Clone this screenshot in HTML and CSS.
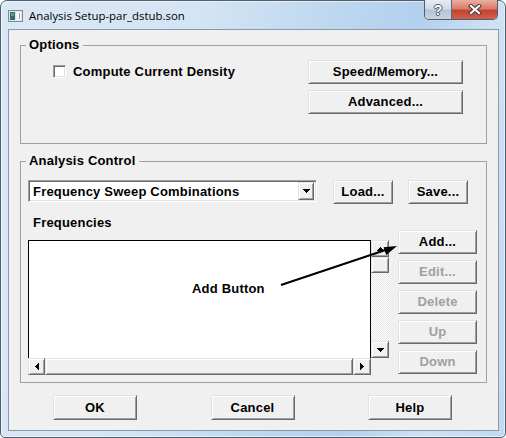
FILE: index.html
```html
<!DOCTYPE html>
<html>
<head>
<meta charset="utf-8">
<title>Analysis Setup</title>
<link rel="stylesheet" href="styles.css">
</head>
<body>
<div class="window">
  <div class="titlebar">
    <svg class="app-icon" width="15" height="12" viewBox="0 0 15 12" shape-rendering="crispEdges">
      <rect x="0.5" y="0.5" width="14" height="11" fill="#e4e8ec" stroke="#7d8a96"/>
      <rect x="2" y="2" width="5" height="8" fill="#2f6f5c"/>
      <rect x="3" y="3" width="3" height="3" fill="#5fa08a"/>
      <rect x="8" y="2" width="5" height="8" fill="#f6f8fa"/>
      <rect x="11" y="3" width="1" height="6" fill="#9aa6b1"/>
    </svg>
    <span class="title">Analysis Setup-par_dstub.son</span>
    <div class="caption-btns">
      <div class="cap help">?</div>
      <div class="cap close">
        <svg width="14" height="11" viewBox="0 0 14 11">
          <path d="M3 2 L11 9 M11 2 L3 9" stroke="#4a3a38" stroke-width="4.2" stroke-linecap="square"/>
          <path d="M3 2 L11 9 M11 2 L3 9" stroke="#ffffff" stroke-width="2.2" stroke-linecap="square"/>
        </svg>
      </div>
    </div>
  </div>

  <div class="client">
    <fieldset class="group options">
      <legend>Options</legend>
      <div class="options-body">
        <div class="check"><span class="box"></span><span>Compute Current Density</span></div>
        <div class="btn-col">
          <div class="btn wide">Speed/Memory...</div>
          <div class="btn wide">Advanced...</div>
        </div>
      </div>
    </fieldset>

    <fieldset class="group analysis">
      <legend>Analysis Control</legend>
      <div class="analysis-body">
        <div class="row1">
          <div class="combo">
            <span class="combo-text">Frequency Sweep Combinations</span>
            <span class="combo-btn">
              <svg width="7" height="4" viewBox="0 0 7 4" shape-rendering="crispEdges"><polygon points="0,0 7,0 3.5,4" fill="#000"/></svg>
            </span>
          </div>
          <div class="btn small load">Load...</div>
          <div class="btn small save">Save...</div>
        </div>
        <div class="row2">
          <div class="freq">
            <div class="label">Frequencies</div>
            <div class="listbox">
              <div class="list-area"></div>
              <div class="vscroll">
                <div class="sbtn v">
                  <svg width="7" height="4" viewBox="0 0 7 4" shape-rendering="crispEdges"><polygon points="0,4 7,4 3.5,0" fill="#000"/></svg>
                </div>
                <div class="sbtn vthumb"></div>
                <div class="track"></div>
                <div class="sbtn v">
                  <svg width="7" height="4" viewBox="0 0 7 4" shape-rendering="crispEdges"><polygon points="0,0 7,0 3.5,4" fill="#000"/></svg>
                </div>
              </div>
              <div class="hscroll">
                <div class="sbtn h left">
                  <svg width="4" height="7" viewBox="0 0 4 7" shape-rendering="crispEdges"><polygon points="4,0 4,7 0,3.5" fill="#000"/></svg>
                </div>
                <div class="sbtn hthumb"></div>
                <div class="sbtn h right">
                  <svg width="4" height="7" viewBox="0 0 4 7" shape-rendering="crispEdges"><polygon points="0,0 0,7 4,3.5" fill="#000"/></svg>
                </div>
              </div>
              <div class="corner"></div>
            </div>
          </div>
          <div class="side-btns">
            <div class="btn side">Add...</div>
            <div class="btn side disabled">Edit...</div>
            <div class="btn side disabled">Delete</div>
            <div class="btn side disabled">Up</div>
            <div class="btn side disabled">Down</div>
          </div>
        </div>
      </div>
    </fieldset>

    <div class="footer">
      <div class="btn foot">OK</div>
      <div class="btn foot">Cancel</div>
      <div class="btn foot">Help</div>
    </div>
  </div>

  <svg class="annot" width="506" height="438" viewBox="0 0 506 438">
    <line x1="281" y1="285" x2="387" y2="249.5" stroke="#000" stroke-width="2"/>
    <polygon points="397,246 383.6,247.3 386.2,254.9" fill="#000"/>
  </svg>
  <span class="annot-text">Add Button</span>
</div>
</body>
</html>
```

FILE: styles.css
```css
html, body {
  margin: 0;
  padding: 0;
  background: #ffffff;
}

body {
  width: 506px;
  height: 438px;
  overflow: hidden;
  font-family: "Liberation Sans", Arial, sans-serif;
  font-size: 13px;
  color: #000;
}

.window {
  position: relative;
  box-sizing: border-box;
  width: 506px;
  height: 438px;
  border: 1px solid #52606e;
  border-radius: 7px 7px 5px 5px;
  background:
    linear-gradient(100deg, #dbe8f5 0%, #d3e4f4 35%, #bad5ef 62%, #b3d0ee 72%, #cfe2f4 86%, #c2d9f1 100%);
  box-shadow: inset 0 0 0 1px rgba(255, 255, 255, 0.55);
  display: flex;
  flex-direction: column;
}

/* ---------- title bar ---------- */
.titlebar {
  flex: none;
  height: 28px;
  display: flex;
  align-items: center;
}

.app-icon {
  flex: none;
  margin-left: 7px;
  margin-top: 1px;
}

.title {
  margin-left: 6px;
  margin-top: 1px;
  font-family: "Open Sans", "Noto Sans", sans-serif;
  font-size: 11.4px;
  color: #000;
  white-space: nowrap;
}

.caption-btns {
  margin-left: auto;
  margin-right: 7px;
  margin-top: -1px;
  align-self: flex-start;
  display: flex;
  height: 20px;
  box-sizing: border-box;
  border: 1px solid #4f5e6d;
  border-top: none;
  border-radius: 0 0 5px 5px;
  overflow: hidden;
}

.cap {
  height: 19px;
  display: flex;
  align-items: center;
  justify-content: center;
}

.cap.help {
  width: 27px;
  border-right: 1px solid #5a6a7a;
  background: linear-gradient(#e4ecf4 0%, #d0dbe7 45%, #b5c4d5 55%, #c6d3e1 100%);
  font-family: "Liberation Sans", Arial, sans-serif;
  font-weight: bold;
  font-size: 14px;
  color: #fff;
  text-shadow: 1px 0 0 #4a5868, -1px 0 0 #4a5868, 0 1px 0 #4a5868, 0 -1px 0 #4a5868;
  padding-top: 1px;
  box-sizing: border-box;
}

.cap.close {
  width: 45px;
  background: linear-gradient(#eab0a3 0%, #dc7a68 45%, #c7432f 55%, #d0604a 100%);
}

/* ---------- client ---------- */
.client {
  flex: 1;
  margin: 0 6px 6px 7px;
  background: #f0f0f0;
  border: 1px solid #8799ab;
  padding: 7px 11px 10px 11px;
  display: flex;
  flex-direction: column;
  min-height: 0;
}

.group {
  margin: 0;
  padding: 0;
  border: 1px solid #a0a0a0;
  min-width: 0;
}

.group legend {
  margin-left: 5px;
  padding: 0 3px;
  font-weight: bold;
  font-size: 13px;
  letter-spacing: 0.2px;
  line-height: 16px;
}

.analysis {
  margin-top: 9px;
}

/* options */
.options-body {
  display: flex;
  justify-content: space-between;
  align-items: flex-start;
  padding: 7px 23px 29px 32px;
}

.check {
  display: flex;
  align-items: center;
  gap: 7px;
  height: 16px;
  margin-top: 3px;
  font-weight: bold;
  letter-spacing: 0.2px;
}

.box {
  flex: none;
  box-sizing: border-box;
  width: 13px;
  height: 13px;
  background: #fff;
  border: 1px solid;
  border-color: #a0a0a0 #ffffff #ffffff #a0a0a0;
  box-shadow: inset 1px 1px 0 #696969, inset -1px -1px 0 #e3e3e3;
}

.btn-col {
  display: flex;
  flex-direction: column;
  gap: 6px;
}

/* buttons */
.btn {
  box-sizing: border-box;
  display: flex;
  align-items: center;
  justify-content: center;
  background: #f0f0f0;
  border: 1px solid;
  border-color: #e3e3e3 #696969 #696969 #e3e3e3;
  box-shadow: inset 1px 1px 0 #ffffff, inset -1px -1px 0 #a0a0a0;
  font-weight: bold;
  font-size: 13px;
  letter-spacing: 0.2px;
  line-height: 16px;
  white-space: nowrap;
}

.btn.wide {
  width: 155px;
  height: 24px;
}

.btn.small {
  width: 60px;
  height: 24px;
}

.btn.load {
  margin-left: 16px;
}

.btn.save {
  margin-left: 15px;
}

.btn.side {
  width: 79px;
  height: 24px;
}

.btn.disabled {
  color: #a0a0a0;
}

.btn.foot {
  width: 84px;
  height: 25px;
}

/* analysis */
.analysis-body {
  padding: 11px 7px 7px 7px;
}

.row1 {
  display: flex;
  align-items: flex-start;
}

.combo {
  box-sizing: border-box;
  width: 289px;
  height: 22px;
  padding: 2px;
  background: #fff;
  border: 1px solid;
  border-color: #a0a0a0 #ffffff #ffffff #a0a0a0;
  box-shadow: inset 1px 1px 0 #696969, inset -1px -1px 0 #e3e3e3;
  display: flex;
  align-items: center;
}

.combo-text {
  margin-left: 2px;
  font-weight: bold;
  letter-spacing: 0.2px;
  white-space: nowrap;
}

.combo-btn {
  margin-left: auto;
  box-sizing: border-box;
  width: 16px;
  height: 18px;
  display: flex;
  align-items: center;
  justify-content: center;
  background: #f0f0f0;
  border: 1px solid;
  border-color: #e3e3e3 #696969 #696969 #e3e3e3;
  box-shadow: inset 1px 1px 0 #ffffff, inset -1px -1px 0 #a0a0a0;
}

.row2 {
  display: flex;
  align-items: flex-start;
  gap: 9px;
  margin-top: 11px;
}

.label {
  height: 16px;
  line-height: 16px;
  padding-left: 5px;
  margin-bottom: 9px;
  font-weight: bold;
  letter-spacing: 0.2px;
}

.listbox {
  width: 361px;
  height: 135px;
  display: grid;
  grid-template-columns: 343px 18px;
  grid-template-rows: 118px 17px;
}

.list-area {
  background: #fff;
  border-top: 1px solid #000;
  border-left: 1px solid #000;
  border-right: 1px solid #000;
}

.vscroll {
  display: flex;
  flex-direction: column;
}

.hscroll {
  display: flex;
}

.corner {
  background: #f0f0f0;
}

.sbtn {
  box-sizing: border-box;
  flex: none;
  display: flex;
  align-items: center;
  justify-content: center;
  background: #f0f0f0;
  border: 1px solid;
  border-color: #e3e3e3 #696969 #696969 #e3e3e3;
  box-shadow: inset 1px 1px 0 #ffffff, inset -1px -1px 0 #a0a0a0;
}

.sbtn.v {
  height: 17px;
}

.sbtn.vthumb {
  height: 16px;
}

.track {
  flex: 1;
  background: conic-gradient(#ffffff 25%, #e4e4e4 0 50%, #ffffff 0 75%, #e4e4e4 0) 0 0 / 2px 2px;
}

.sbtn.h.left {
  width: 17px;
}

.sbtn.h.right {
  width: 18px;
}

.sbtn.hthumb {
  flex: 1;
}

.side-btns {
  display: flex;
  flex-direction: column;
  gap: 6px;
  padding-top: 15px;
}

/* footer */
.footer {
  display: flex;
  justify-content: space-between;
  margin-top: 12px;
  padding: 0 35px 0 33px;
}

/* annotation overlay */
.annot {
  position: absolute;
  left: -1px;
  top: -1px;
  pointer-events: none;
}

.annot-text {
  position: absolute;
  left: 191px;
  top: 280px;
  font-weight: bold;
  font-size: 13px;
  letter-spacing: 0.2px;
  line-height: 16px;
  white-space: nowrap;
}
```
